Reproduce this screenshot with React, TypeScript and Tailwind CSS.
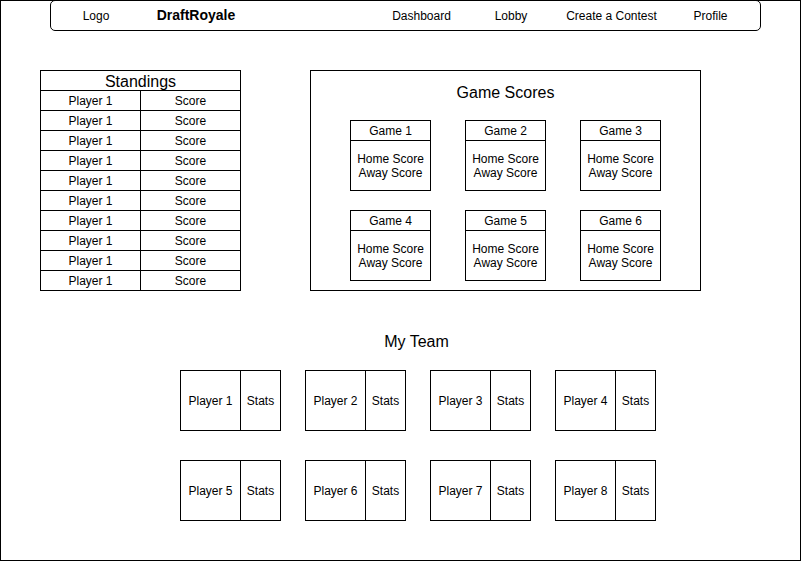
const navLinks = [
  { label: "Dashboard", w: "w-[91px]" },
  { label: "Lobby", w: "w-[88px]" },
  { label: "Create a Contest", w: "w-[113px]" },
  { label: "Profile", w: "w-[85px]" },
];

const games = [1, 2, 3, 4, 5, 6];
const players = [1, 2, 3, 4, 5, 6, 7, 8];

function GameCard({ n }: { n: number }) {
  return (
    <div className="w-[81px] h-[71px] border border-black flex flex-col">
      <div className="h-[20px] border-b border-black flex items-center justify-center">
        Game {n}
      </div>
      <div className="flex-1 flex flex-col items-center justify-center leading-[14px]">
        <span>Home Score</span>
        <span>Away Score</span>
      </div>
    </div>
  );
}

function PlayerCard({ n }: { n: number }) {
  return (
    <div className="w-[101px] h-[61px] border border-black flex">
      <div className="w-[60px] border-r border-black flex items-center justify-center">
        Player {n}
      </div>
      <div className="flex-1 flex items-center justify-center">Stats</div>
    </div>
  );
}

export default function App() {
  return (
    <div className="w-[801px] h-[561px] border border-black bg-white text-black text-[12px] font-['Liberation_Sans',Arial,sans-serif] overflow-hidden">
      {/* Nav */}
      <nav className="-mt-px ml-[49px] w-[711px] h-[31px] border border-black rounded-[5px] flex items-center">
        <span className="w-[90px] text-center">Logo</span>
        <span className="w-[110px] text-center text-[14px] font-bold">DraftRoyale</span>
        <div className="ml-[125px] flex">
          {navLinks.map((l) => (
            <span key={l.label} className={`${l.w} text-center`}>
              {l.label}
            </span>
          ))}
        </div>
      </nav>

      <div className="mt-[39px] ml-[39px] flex items-start">
        {/* Standings */}
        <div className="w-[201px] border-l border-t border-black">
          <div className="h-[20px] pt-[2px] border-r border-b border-black text-center text-[16px] leading-[18px]">
            Standings
          </div>
          {Array.from({ length: 10 }).map((_, i) => (
            <div key={i} className="flex">
              <div className="w-[100px] h-[20px] border-r border-b border-black flex items-center justify-center">
                Player 1
              </div>
              <div className="w-[100px] h-[20px] border-r border-b border-black flex items-center justify-center">
                Score
              </div>
            </div>
          ))}
        </div>

        {/* Game Scores */}
        <div className="ml-[69px] w-[391px] h-[221px] border border-black">
          <h2 className="h-[49px] pt-[12px] text-center text-[16px] leading-[20px]">Game Scores</h2>
          <div className="pl-[39px] grid grid-cols-[81px_81px_81px] gap-x-[34px] gap-y-[19px]">
            {games.map((g) => (
              <GameCard key={g} n={g} />
            ))}
          </div>
        </div>
      </div>

      {/* My Team */}
      <div className="ml-[179px] w-[473px] mt-[41px]">
        <h2 className="h-[20px] leading-[20px] text-center text-[16px]">My Team</h2>
        <div className="mt-[18px] grid grid-cols-[101px_101px_101px_101px] gap-x-[24px] gap-y-[29px]">
          {players.map((p) => (
            <PlayerCard key={p} n={p} />
          ))}
        </div>
      </div>
    </div>
  );
}
